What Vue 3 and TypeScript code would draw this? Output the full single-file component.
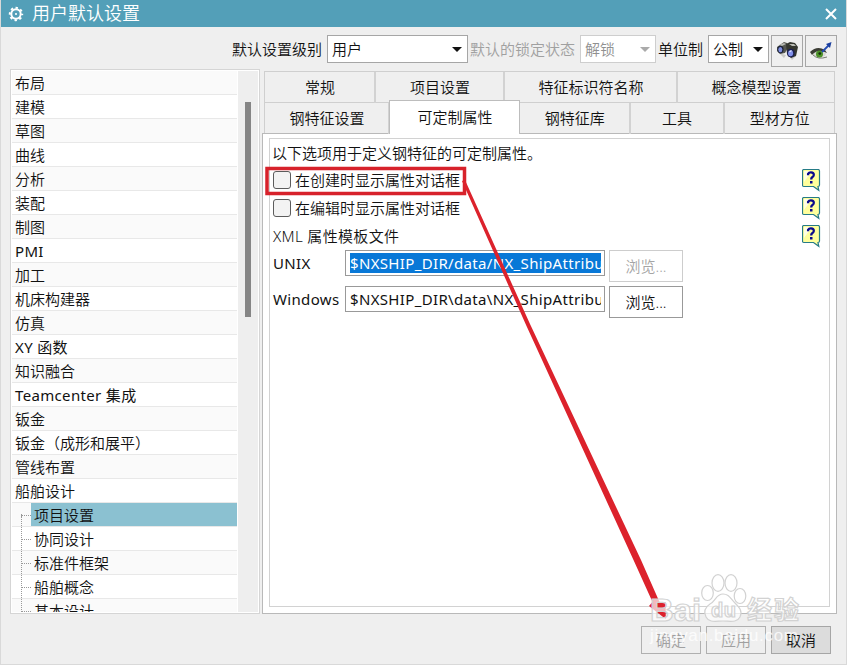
<script setup lang="ts">
import { ref } from 'vue'

interface TreeItem {
  label: string
  child?: boolean
}

const items: TreeItem[] = [
  ...['布局', '建模', '草图', '曲线', '分析', '装配', '制图', 'PMI', '加工', '机床构建器', '仿真', 'XY 函数', '知识融合', 'Teamcenter 集成', '钣金', '钣金（成形和展平）', '管线布置', '船舶设计'].map((label) => ({ label })),
  ...['项目设置', '协同设计', '标准件框架', '船舶概念', '基本设计'].map((label) => ({ label, child: true })),
]
const selected = ref('项目设置')
const upperTabs: string[] = ['常规', '项目设置', '特征标识符名称', '概念模型设置']
const lowerTabs: string[] = ['钢特征设置', '可定制属性', '钢特征库', '工具', '型材方位']
const activeTab = ref('可定制属性')
const options = ['在创建时显示属性对话框', '在编辑时显示属性对话框']
const files = [
  { name: 'UNIX', path: '$NXSHIP_DIR/data/NX_ShipAttribu', locked: true },
  { name: 'Windows', path: '$NXSHIP_DIR\\data\\NX_ShipAttribu', locked: false },
]
const startsLatin = (s: string): boolean => /^[A-Za-z]/.test(s)
</script>

<template>
  <div class="dialog">
    <header class="title-bar">
      <svg class="gear" width="16" height="16" viewBox="0 0 16 16">
        <circle cx="8" cy="8" r="4.7" fill="none" stroke="#fff" stroke-width="2" />
        <circle cx="8" cy="8" r="6.2" fill="none" stroke="#fff" stroke-width="2" stroke-dasharray="2.4 2.47" stroke-dashoffset="1.2" />
        <circle cx="8" cy="8" r="1.1" fill="#fff" />
      </svg>
      <h1>用户默认设置</h1>
      <svg class="close" width="12" height="12" viewBox="0 0 12 12">
        <path d="M1 1L11 11M11 1L1 11" stroke="#fff" stroke-width="2" />
      </svg>
    </header>

    <div class="toolbar">
      <span class="lbl level">默认设置级别</span>
      <div class="select wide">用户<i class="caret"></i></div>
      <span class="lbl lock">默认的锁定状态</span>
      <div class="select lock-select">解锁<i class="caret"></i></div>
      <span class="lbl unit">单位制</span>
      <div class="select narrow">公制<i class="caret"></i></div>
      <button class="tool">
        <svg width="24" height="20" viewBox="0 0 24 20">
          <path d="M4 12l5 5 2-3zM14 15l3 4 4-4z" fill="#c9c9c6" />
          <path d="M2 6L9 1l3 1 2 3-4 7-5 1-3-3z" fill="#55564f" />
          <path d="M11 3l4-2 5 1 3 4-2 9-5 2-4-4z" fill="#34362f" />
          <path d="M4 4l5-2 2 1-4 2zM14 3l5 0 2 2-4 0z" fill="#b9bbb4" />
          <ellipse cx="5.5" cy="8.5" rx="3.1" ry="3.7" fill="#1c2338" />
          <ellipse cx="5.3" cy="8.6" rx="2" ry="2.7" fill="#7f8ee0" />
          <ellipse cx="15.8" cy="12" rx="3.8" ry="4.2" fill="#1c2050" />
          <ellipse cx="15.6" cy="12.2" rx="2.5" ry="3" fill="#8190ea" />
          <path d="M14.500 11l2-1.500" stroke="#dfe4ff" stroke-width="1.2" />
        </svg>
      </button>
      <button class="tool">
        <svg width="24" height="20" viewBox="0 0 24 20">
          <path d="M2 12Q8 8 17 12L16 15Q9 18 4 14z" fill="#d9dad3" />
          <path d="M1 11Q8 4 16 9L18 12Q10 8 5 12L3 14z" fill="#3c3d35" />
          <path d="M4 14Q9 19 18 16" fill="none" stroke="#777a6e" stroke-width="1" />
          <circle cx="10.5" cy="13" r="3.5" fill="#4c9228" />
          <circle cx="10.8" cy="12.6" r="1.4" fill="#17300c" />
          <path d="M13 11L20 4" stroke="#244bb0" stroke-width="1.8" />
          <path d="M17 3l5.500-2L21 7z" fill="#1b3f9f" />
        </svg>
      </button>
    </div>

    <main class="body">
      <nav class="tree">
        <ul>
          <li v-for="item in items" :key="item.label" :class="{ child: item.child, western: startsLatin(item.label) }">
            <span class="node" :class="{ selected: item.child && item.label === selected }">{{ item.label }}</span>
          </li>
        </ul>
        <div class="track"><div class="thumb"></div></div>
      </nav>

      <section class="pages">
        <div class="tabs upper">
          <div v-for="t in upperTabs" :key="t" class="tab">{{ t }}</div>
        </div>
        <div class="tabs lower">
          <div v-for="t in lowerTabs" :key="t" class="tab" :class="{ active: t === activeTab }" @click="activeTab = t">{{ t }}</div>
        </div>
        <div class="panel">
          <div class="frame">
            <div class="form">
              <p class="intro">以下选项用于定义钢特征的可定制属性。</p>
              <label v-for="o in options" :key="o" class="option"><i class="box"></i><span>{{ o }}</span></label>
              <p class="heading western">XML 属性模板文件</p>
              <div v-for="f in files" :key="f.name" class="file">
                <span class="name western">{{ f.name }}</span>
                <div class="field"><span class="value western" :class="{ marked: f.locked }">{{ f.path }}</span></div>
                <button class="browse" :disabled="f.locked">浏览...</button>
              </div>
            </div>
            <div class="helps">
              <svg v-for="n in 3" :key="n" width="19" height="23" viewBox="0 0 19 23">
                <path d="M2 .5H16Q17.500 .5 17.500 2V16Q17.500 17.500 16 17.500L16.800 21.300L11.500 17.500H2Q.5 17.500 .5 16V2Q.5 .5 2 .5z" fill="#ffff9c" stroke="#267b86" stroke-width="1.2" />
                <path d="M2 2h8L2 13z" fill="#ffffe2" />
                <path d="M6.100 6.300V4.800Q7 3.300 9 3.400Q12 3.500 11.800 6Q11.700 7.400 10.200 8.300Q9.200 9 9.200 10.400" fill="none" stroke="#09098c" stroke-width="2.3" />
                <path d="M8 12h2.500v2.500H8z" fill="#09098c" />
              </svg>
            </div>
          </div>
        </div>
      </section>
    </main>

    <footer class="actions">
      <button disabled>确定</button>
      <button disabled>应用</button>
      <button class="cancel">取消</button>
    </footer>

    <svg class="overlay" width="847" height="665" viewBox="0 0 847 665">
      <rect x="267" y="168.500" width="197.500" height="25" fill="none" stroke="#d7222b" stroke-width="3.500" />
      <path d="M462 181L465 180L530 324L641 560L659.500 602H665.700V619L649 606L652.500 602L633.500 560L526.500 326Z" fill="#dc222c" />
      <g class="mark">
        <g fill="#fff" fill-opacity=".7" stroke="#d2d2d2" stroke-width="1.2">
          <ellipse cx="707.500" cy="593" rx="5.8" ry="7.5" />
          <ellipse cx="718" cy="583" rx="6" ry="8.3" />
          <ellipse cx="731" cy="583" rx="6" ry="8.3" />
          <ellipse cx="740" cy="596" rx="5.8" ry="7.5" />
          <path d="M723 594C716 594 716 601 710 604C704 608 704 613 706 617C709 623 716 621 723 621C730 621 737 623 740 617C743 611 739 607 735 603C730 598 729 594 723 594Z" />
          <text x="650" y="621" class="latin" textLength="51" lengthAdjust="spacingAndGlyphs">Bai</text>
          <text x="711" y="617" class="du" textLength="25">du</text>
          <text x="747" y="619" class="cjk" textLength="52">经验</text>
        </g>
        <text x="650" y="641" class="url" textLength="148">jingyan.baidu.com</text>
      </g>
    </svg>
  </div>
</template>

<style>
body {
  margin: 0;
  overflow: hidden;
}
</style>

<style scoped>
* {
  box-sizing: border-box;
}
.dialog {
  position: relative;
  width: 847px;
  height: 665px;
  overflow: hidden;
  background: #efefef;
  border: solid #d9d9d9;
  border-width: 0 1px 1px;
  color: #111;
  font: 350 15px/24px "Noto Sans", "Noto Sans CJK SC", sans-serif;
}
p, h1, ul {
  margin: 0;
  padding: 0;
}
button {
  padding: 0;
  font: inherit;
  color: inherit;
}
.title-bar {
  display: flex;
  align-items: center;
  height: 27px;
  margin: 0 -1px;
  padding: 0 11px 0 8px;
  background: #539fb8;
  color: #fff;
}
.title-bar h1 {
  flex: 1;
  margin-left: 8px;
  font-size: 18px;
  font-weight: 350;
  line-height: 27px;
}
.close { margin-right: -1px; }
.toolbar {
  display: flex;
  height: 42px;
  padding: 8px 0 0 231px;
}
.lbl {
  flex: none;
  line-height: 28px;
  white-space: nowrap;
}
.level { width: 95px; }
.lock { width: 110px; margin-left: 2px; color: #a0a0a0; }
.unit { width: 50px; margin-left: 2px; }
.select {
  display: flex;
  align-items: center;
  justify-content: space-between;
  height: 28px;
  padding: 0 5px 0 4px;
  border: 1px solid #a6a6a6;
  background: #fff;
}
.wide { width: 141px; }
.lock-select { width: 76px; border-color: #cecece; color: #909090; }
.narrow { width: 61px; }
.caret {
  border: 5px solid transparent;
  border-top-color: #111;
  border-bottom: 0;
}
.lock-select .caret { border-top-color: #aaa; }
.tool {
  display: flex;
  align-items: center;
  justify-content: center;
  width: 32px;
  height: 32px;
  margin-left: 2px;
  border: 1px solid #a6a6a6;
  background: #efefef;
}
.body {
  display: flex;
  height: 545px;
  padding-left: 9px;
}
.tree {
  display: flex;
  width: 250px;
  height: 545px;
  padding: 1px 0 1px 1px;
  border: 1px solid #d5d5d5;
  background: #fff;
}
.tree ul {
  width: 225px;
  overflow: hidden;
  list-style: none;
}
.tree li {
  height: 24px;
  padding-left: 3px;
  border-bottom: 1px solid #e8e8e8;
  line-height: 25px;
  white-space: nowrap;
}
.tree li:nth-child(odd) { background: #fafafa; }
.western {
  font-weight: 400;
  letter-spacing: .34px;
}
.node {
  display: block;
  height: 23px;
}
.tree .child {
  position: relative;
  padding-left: 19px;
}
.child .node { padding-left: 3px; }
.child::before {
  content: "";
  position: absolute;
  left: 9px;
  top: -12px;
  width: 9px;
  height: 24px;
  border: dotted #999;
  border-width: 0 0 1px 1px;
}
.child:has(.selected)::before {
  top: 11px;
  height: 1px;
}
.node.selected { background: #8bc1d1; }
.track {
  width: 20px;
  margin-left: 1px;
  padding: 31px 0 0 7px;
  background: #eee;
}
.thumb {
  width: 6px;
  height: 215px;
  background: #858585;
}
.pages {
  width: 575px;
  margin-left: 2px;
  padding-top: 2px;
}
.tabs {
  display: grid;
  width: 571px;
  height: 31px;
  margin-left: 2px;
  border: solid #cfcfcf;
  border-width: 1px 1px 0;
}
.upper { grid-template-columns: 111px 129px 173px 1fr; }
.lower { grid-template-columns: 125px 130px 110.500px 94px 1fr; }
.tab {
  padding-left: 1px;
  border-right: 2px solid #d2d2d2;
  line-height: 31px;
  text-align: center;
}
.tab:last-child { border-right: 0; }
.tab.active {
  z-index: 1;
  height: 34px;
  margin: -3px 0 0 -1px;
  border: 1px solid #bdbdbd;
  border-bottom: 0;
  background: #fff;
  line-height: 33px;
}
.panel {
  height: 481px;
  padding: 4px 6px 6px;
  border: 1px solid #b9b9b9;
  background: #fff;
}
.frame {
  display: flex;
  justify-content: space-between;
  height: 469px;
  padding: 3px 8px 0 3px;
  border: 1px solid #d2d2d2;
}
.intro {
  height: 24px;
  margin-left: -1px;
  line-height: 23px;
}
.option {
  display: flex;
  align-items: center;
  height: 28px;
}
.option span { line-height: 24px; }
.box {
  width: 18px;
  height: 18px;
  margin-right: 4px;
  border: 1px solid #5c5c5c;
  border-radius: 3px;
  background: #f3f3f3;
}
.heading {
  height: 28px;
  line-height: 28px;
}
.heading.western {
  font-weight: 350;
}
.file {
  display: flex;
  height: 36px;
}
.name {
  width: 72px;
  line-height: 26px;
}
.field {
  width: 260px;
  height: 26px;
  padding: 2px 3px 2px 4px;
  border: 1px solid #999;
}
.value {
  display: block;
  height: 20px;
  overflow: hidden;
  line-height: 21px;
  white-space: nowrap;
}
.marked {
  background: #0878d7;
  color: #fff;
}
.browse {
  width: 74px;
  height: 32px;
  margin-left: 4px;
  border: 1px solid #999;
  background: #fff;
}
.browse:disabled {
  border-color: #cdcdcd;
  color: #a5a5a5;
}
.helps {
  display: flex;
  flex-direction: column;
  gap: 5px;
  padding-top: 27px;
}
.actions {
  display: flex;
  gap: 5px;
  padding: 12px 0 0 640px;
}
.actions button {
  width: 60px;
  height: 28px;
  border: 1px solid #b0b0b0;
  background: #efefef;
  color: #a0a0a0;
}
.actions .cancel {
  border-color: #a6a6a6;
  background: #dcdcdc;
  color: #111;
}
.overlay {
  position: absolute;
  left: -1px;
  top: 0;
  z-index: 5;
  pointer-events: none;
}
.latin { font: 700 32px "Liberation Sans", sans-serif; }
.du { font: 700 20px "Liberation Sans", sans-serif; }
.cjk { font: 700 25px "Noto Sans CJK SC", sans-serif; }
.url {
  font: 400 17px "Liberation Sans", sans-serif;
  fill: #fff;
  fill-opacity: .8;
}
</style>
